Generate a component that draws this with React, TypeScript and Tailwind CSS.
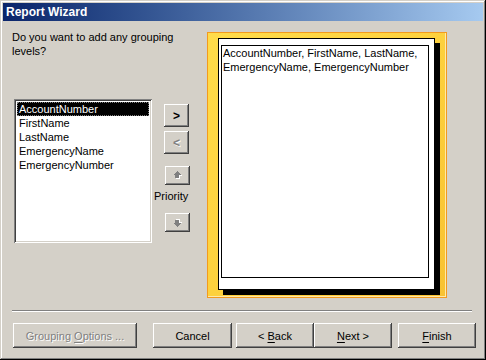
import React from "react";

const raised =
  "shadow-[inset_-1px_-1px_#404040,inset_1px_1px_#ffffff,inset_-2px_-2px_#808080,inset_2px_2px_#d4d0c8]";

function Btn({
  className = "",
  children,
  disabled = false,
}: {
  className?: string;
  children: React.ReactNode;
  disabled?: boolean;
}) {
  return (
    <div
      className={`bg-[#d4d0c8] ${raised} flex items-center justify-center ${
        disabled ? "text-[#808080] [text-shadow:1px_1px_0_#ffffff]" : "text-black"
      } ${className}`}
    >
      <span className="whitespace-pre">{children}</span>
    </div>
  );
}

function Arrow({ down = false }: { down?: boolean }) {
  const pts = "4,0 8,4 6,4 6,7 2,7 2,4 0,4";
  return (
    <svg
      width="10"
      height="9"
      viewBox="0 0 10 9"
      shapeRendering="crispEdges"
      style={{ transform: down ? "scaleY(-1)" : undefined, display: "block" }}
    >
      <g transform="translate(1,1)">
        <polygon points={pts} fill="#ffffff" />
      </g>
      <polygon points={pts} fill="#808080" />
    </svg>
  );
}

export default function App() {
  const items = ["AccountNumber", "FirstName", "LastName", "EmergencyName", "EmergencyNumber"];
  return (
    <div
      className={`w-[486px] h-[360px] bg-[#d4d0c8] p-[3px] flex flex-col font-['Liberation_Sans',Arial,sans-serif] text-[11px] leading-[14px] text-black shadow-[inset_-1px_-1px_#000000,inset_1px_1px_#d4d0c8,inset_-2px_-2px_#808080,inset_2px_2px_#ffffff]`}
    >
      {/* Title bar */}
      <div className="h-[18px] bg-gradient-to-r from-[#0a246a] to-[#a6caf0] pl-[3px] flex items-center text-white font-bold text-[12px] leading-[18px]">
        Report Wizard
      </div>

      {/* Body */}
      <div className="flex">
        {/* Column 1 */}
        <div className="ml-[9px] w-[142px] flex flex-col">
          <div className="mt-[9px] leading-[14px] whitespace-nowrap">
            Do you want to add any grouping
            <br />
            levels?
          </div>
          <div className="mt-[41px] ml-[2px] w-[138px] h-[144px] bg-white shadow-[inset_1px_1px_#808080,inset_-1px_-1px_#ffffff,inset_2px_2px_#404040,inset_-2px_-2px_#d4d0c8] p-[3px]">
            {items.map((it, i) => (
              <div
                key={it}
                className={`h-[14px] px-[2px] leading-[14px] whitespace-nowrap ${
                  i === 0 ? "bg-black text-white outline-1 outline-dotted outline-[#7f7f7f] -outline-offset-1" : "text-black"
                }`}
              >
                {it}
              </div>
            ))}
          </div>
        </div>

        {/* Column 2 */}
        <div className="w-[53px] flex flex-col">
          <Btn className="mt-[83px] ml-[10px] w-[25px] h-[23px] font-bold text-[12px]">&gt;</Btn>
          <Btn disabled className="mt-[4px] ml-[10px] w-[25px] h-[23px] font-bold text-[12px]">
            &lt;
          </Btn>
          <Btn className="mt-[12px] ml-[11px] w-[25px] h-[19px]">
            <Arrow />
          </Btn>
          <div className="mt-[4px] leading-[14px]">Priority</div>
          <Btn className="mt-[10px] ml-[11px] w-[25px] h-[19px]">
            <Arrow down />
          </Btn>
        </div>

        {/* Column 3: preview */}
        <div className="mt-[11px] w-[240px] h-[266px] border border-[#f39a1e] bg-gradient-to-br from-[#ffdc4a] via-[#fdd13d] to-[#f8c232] shadow-[inset_-1px_-1px_#ffe9a8] relative">
          <div className="absolute left-[15px] top-[10px] w-[217px] h-[252px] bg-black" />
          <div className="relative ml-[10px] mt-[5px] w-[217px] h-[252px] bg-white border border-black pl-[2px] pt-[6px]">
            <div className="w-[208px] h-[233px] border border-black pl-[1px] leading-[14px]">
              AccountNumber, FirstName, LastName, EmergencyName, EmergencyNumber
            </div>
          </div>
        </div>
      </div>

      {/* Separator */}
      <div className="mt-[12px] ml-[9px] w-[460px] h-[2px] border-t border-t-[#808080] border-b border-b-white" />

      {/* Buttons */}
      <div className="mt-[11px] ml-[10px] flex">
        <Btn disabled className="w-[124px] h-[25px]">
          Grouping <span className="underline underline-offset-2">O</span>ptions ...
        </Btn>
        <Btn className="ml-[16px] w-[79px] h-[25px]">Cancel</Btn>
        <Btn className="ml-[4px] w-[78px] h-[25px]">
          &lt; <span className="underline underline-offset-2">B</span>ack
        </Btn>
        <Btn className="w-[78px] h-[25px]">
          <span className="underline underline-offset-2">N</span>ext &gt;
        </Btn>
        <Btn className="ml-[6px] w-[78px] h-[25px]">
          <span className="underline underline-offset-2">F</span>inish
        </Btn>
      </div>
    </div>
  );
}
